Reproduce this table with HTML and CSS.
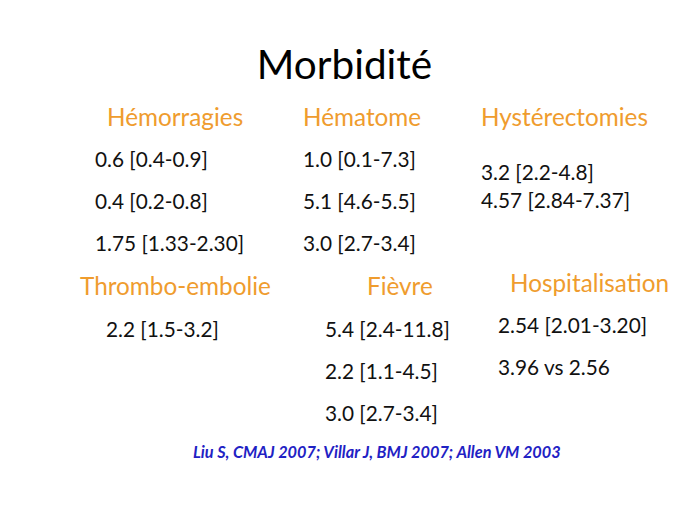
FILE: index.html
```html
<!DOCTYPE html>
<html lang="fr">
<head>
<meta charset="utf-8">
<title>Morbidité</title>
<link rel="stylesheet" href="styles.css">
</head>
<body>
<div class="slide">
  <h1 class="title">Morbidité</h1>
  <div class="grid">
    <div class="cell c1r1">
      <h2 class="head">Hémorragies</h2>
      <p class="val">0.6 [0.4-0.9]</p>
      <p class="val">0.4 [0.2-0.8]</p>
      <p class="val">1.75 [1.33-2.30]</p>
    </div>
    <div class="cell c2r1">
      <h2 class="head">Hématome</h2>
      <p class="val">1.0 [0.1-7.3]</p>
      <p class="val">5.1 [4.6-5.5]</p>
      <p class="val">3.0 [2.7-3.4]</p>
    </div>
    <div class="cell c3r1">
      <h2 class="head">Hystérectomies</h2>
      <div class="tight">
        <p class="val">3.2 [2.2-4.8]</p>
        <p class="val">4.57 [2.84-7.37]</p>
      </div>
    </div>
    <div class="cell c1r2">
      <h2 class="head">Thrombo-embolie</h2>
      <p class="val">2.2 [1.5-3.2]</p>
    </div>
    <div class="cell c2r2">
      <h2 class="head">Fièvre</h2>
      <p class="val">5.4 [2.4-11.8]</p>
      <p class="val">2.2 [1.1-4.5]</p>
      <p class="val">3.0 [2.7-3.4]</p>
    </div>
    <div class="cell c3r2">
      <h2 class="head">Hospitalisation</h2>
      <p class="val">2.54 [2.01-3.20]</p>
      <p class="val">3.96 vs 2.56</p>
    </div>
  </div>
  <p class="cite">Liu S, CMAJ 2007; Villar J, BMJ 2007; Allen VM 2003</p>
</div>
</body>
</html>
```

FILE: styles.css
```css
* { box-sizing: border-box; }
html, body {
  margin: 0;
  padding: 0;
  background: #ffffff;
}
body {
  font-family: Lato, "Open Sans", sans-serif;
  color: #111111;
}
.slide {
  width: 689px;
  height: 517px;
  padding-top: 33px;
  overflow: hidden;
}
.title {
  margin: 0;
  text-align: center;
  font-weight: 400;
  font-size: 40.5px;
  line-height: 62px;
  color: #000;
}
.grid {
  display: grid;
  grid-template-columns: 223px 178px 1fr;
  padding-left: 80px;
  padding-top: 1px;
}
.cell { min-width: 0; }
.head {
  margin: 0;
  font-weight: 400;
  font-size: 24.3px;
  line-height: 42px;
  color: #ef9c2e;
  white-space: nowrap;
}
.val {
  margin: 0;
  font-size: 20.8px;
  line-height: 42px;
  white-space: nowrap;
}
.tight { padding-top: 20px; }
.tight .val { line-height: 28px; }
.c1r1 .head { padding-left: 27px; }
.c1r1 .val { padding-left: 15px; }
.c1r2, .c2r2 { padding-top: 1px; }
.c1r2 .head, .c2r2 .head { margin-bottom: 1px; }
.c2r2 .head { padding-left: 64px; }
.c2r2 .val { padding-left: 22px; }
.c1r2 .val { padding-left: 26px; }
.c3r2 { margin-top: -2px; }
.c3r2 .head { padding-left: 29px; }
.c3r2 .val { padding-left: 17px; }
.cite {
  margin: 8px 0 0 0;
  padding-left: 193px;
  font-size: 16.3px;
  font-weight: 700;
  font-style: italic;
  color: #1f22c4;
  line-height: 20px;
}
```
